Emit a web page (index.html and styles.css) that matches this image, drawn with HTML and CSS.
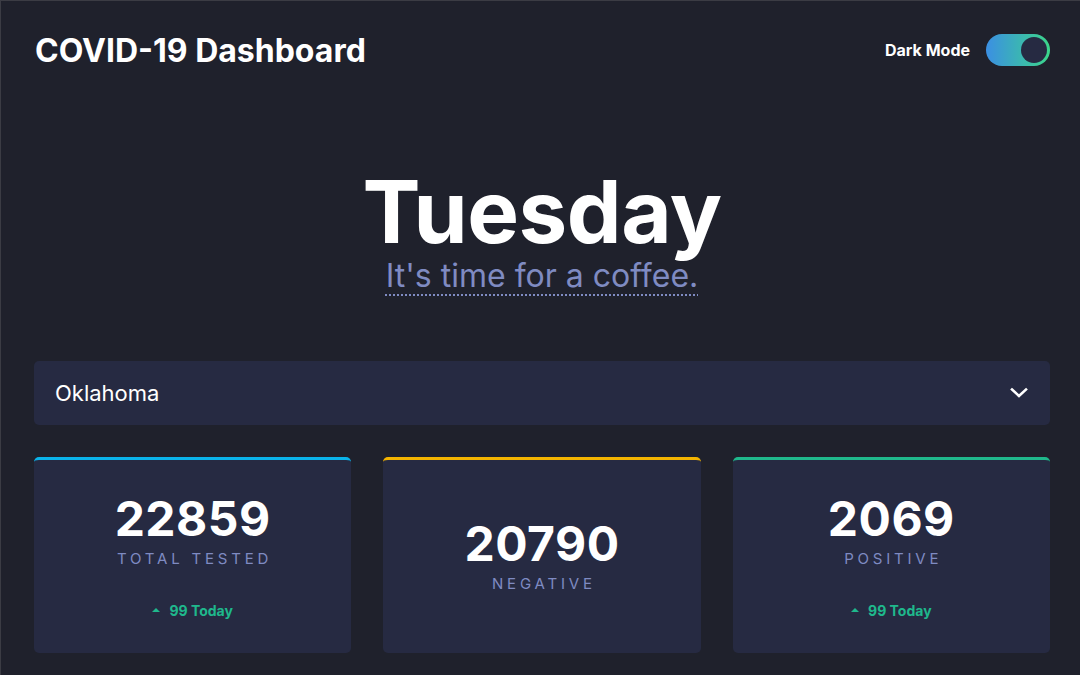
FILE: index.html
```html
<!DOCTYPE html>
<html>
<head>
<meta charset="utf-8">
<link rel="stylesheet" href="styles.css">
</head>
<body>
<div class="page">
  <header class="header">
    <h1 class="title">COVID-19 Dashboard</h1>
    <div class="mode">
      <span class="mode-label">Dark Mode</span>
      <span class="toggle"><span class="knob"></span></span>
    </div>
  </header>
  <section class="hero">
    <div class="day">Tuesday</div>
    <div class="quote"><span class="quote-text">It's time for a coffee.</span></div>
  </section>
  <div class="select">
    <span class="select-text">Oklahoma</span>
    <svg class="chev" width="18" height="12" viewBox="0 0 18 12"><path d="M2 2.5 L9 9 L16 2.5" fill="none" stroke="#fff" stroke-width="2.6" stroke-linecap="square"/></svg>
  </div>
  <div class="cards">
    <div class="card card-blue">
      <div class="num">22859</div>
      <div class="label">TOTAL TESTED</div>
      <div class="today"><span class="tri"></span>99 Today</div>
    </div>
    <div class="card card-yellow">
      <div class="num">20790</div>
      <div class="label">NEGATIVE</div>
    </div>
    <div class="card card-green">
      <div class="num">2069</div>
      <div class="label">POSITIVE</div>
      <div class="today"><span class="tri"></span>99 Today</div>
    </div>
  </div>
</div>
</body>
</html>
```

FILE: styles.css
```css
html, body {
  margin: 0;
  padding: 0;
  background: #1f212c;
}
body {
  font-family: Inter, "Noto Sans", sans-serif;
  color: #fff;
  height: 675px;
  box-sizing: border-box;
  border-top: 1px solid #3b3c44;
  border-left: 1px solid #3b3c44;
}
.page {
  padding: 0 30px 0 33px;
}
.header {
  display: flex;
  justify-content: space-between;
  align-items: center;
  height: 98px;
}
.title {
  margin: 0 0 0 1px;
  font-size: 32px;
  font-weight: 700;
}
.mode {
  display: flex;
  align-items: center;
  gap: 16px;
}
.mode-label {
  font-size: 16px;
  font-weight: 700;
}
.toggle {
  width: 64px;
  height: 32px;
  border-radius: 16px;
  background: linear-gradient(90deg, #3b8fe3, #3bd68a);
  display: flex;
  align-items: center;
  justify-content: flex-end;
  padding: 0 3px;
  box-sizing: border-box;
}
.knob {
  width: 26px;
  height: 26px;
  border-radius: 50%;
  background: #262a42;
}
.hero {
  text-align: center;
  padding-top: 69px;
}
.day {
  font-size: 87px;
  font-weight: 700;
  line-height: 1;
  letter-spacing: -0.5px;
}
.quote {
  font-size: 32px;
  color: #7f8bc2;
  margin-top: 1px;
}
.quote-text {
  text-decoration: underline dotted;
  text-decoration-thickness: 2px;
  text-underline-offset: 7px;
}
.select {
  margin-top: 66px;
  height: 64px;
  background: #262a42;
  border-radius: 5px;
  display: flex;
  align-items: center;
  justify-content: space-between;
  padding: 0 22px 0 21px;
}
.select-text {
  font-size: 22px;
}
.cards {
  display: grid;
  grid-template-columns: 1fr 1fr 1fr;
  gap: 32px;
  margin-top: 32px;
}
.card {
  height: 196px;
  box-sizing: border-box;
  background: #262a42;
  border-radius: 5px;
  border-top: 3px solid #0ab3ea;
  display: flex;
  flex-direction: column;
  align-items: center;
  justify-content: center;
}
.card-yellow { border-top-color: #f4b400; }
.card-green { border-top-color: #1fb88c; }
.num {
  font-size: 48px;
  font-weight: 700;
  line-height: 1;
  letter-spacing: 0.5px;
}
.label {
  font-size: 15px;
  color: #7f8bc2;
  letter-spacing: 3.8px;
  margin-top: 6px;
  margin-right: -3.8px;
}
.today {
  margin-top: 34px;
  font-size: 14px;
  font-weight: 700;
  color: #1fb88c;
  display: flex;
  align-items: center;
  gap: 9px;
}
.tri {
  width: 0;
  height: 0;
  border-left: 4px solid transparent;
  border-right: 4px solid transparent;
  border-bottom: 4px solid #1fb88c;
}
```
